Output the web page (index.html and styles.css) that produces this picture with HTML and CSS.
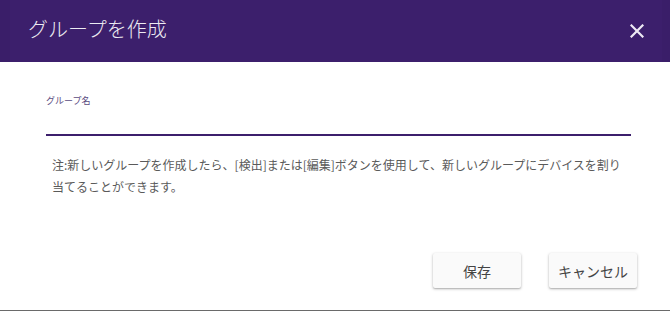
FILE: index.html
```html
<!DOCTYPE html>
<html lang="ja">
<head>
<meta charset="utf-8">
<link rel="stylesheet" href="styles.css">
</head>
<body>
<div class="dialog">
  <header class="header">
    <h1 class="title">グループを作成</h1>
    <button class="close" aria-label="閉じる">
      <svg width="14" height="14" viewBox="0 0 14 14"><path d="M1.5 1.5 L12.5 12.5 M12.5 1.5 L1.5 12.5" stroke="#eeeaf4" stroke-width="2.2" stroke-linecap="square"/></svg>
    </button>
  </header>
  <div class="content">
    <div class="field">
      <label class="label">グループ名</label>
      <div class="input"></div>
    </div>
    <p class="note">注:新しいグループを作成したら、[検出]または[編集]ボタンを使用して、新しいグループにデバイスを割り当てることができます。</p>
  </div>
  <div class="actions">
    <button class="btn">保存</button>
    <button class="btn">キャンセル</button>
  </div>
</div>
</body>
</html>
```
FILE: styles.css
```css
html, body {
  margin: 0;
  padding: 0;
  background: #fff;
}
body {
  font-family: "Noto Sans CJK JP", "Noto Sans", sans-serif;
  width: 670px;
  height: 311px;
  overflow: hidden;
}
.dialog {
  height: 310px;
  border-bottom: 1px solid #6a6a6a;
  display: flex;
  flex-direction: column;
}
.header {
  height: 62px;
  background: #3c1f6c;
  box-shadow: inset 10px 0 0 #3a1e69, inset -8px 0 0 #3a1e69;
  display: flex;
  align-items: center;
  justify-content: space-between;
  padding: 0 26px 0 28px;
  box-sizing: border-box;
}
.title {
  margin: 0;
  font-size: 20px;
  font-weight: 300;
  color: #ecebf2;
  line-height: 1;
  position: relative;
  top: -2px;
}
.close {
  background: none;
  border: 0;
  padding: 0;
  width: 14px;
  height: 14px;
  display: block;
  cursor: pointer;
}
.close svg { display: block; }
.content {
  padding: 33px 39px 0 46px;
}
.field {
  display: flex;
  flex-direction: column;
}
.label {
  font-size: 9px;
  color: #5b4c82;
  line-height: 12px;
}
.input {
  height: 27px;
  border-bottom: 2px solid #3c1f6c;
}
.note {
  margin: 18px 0 0 6px;
  font-size: 12px;
  line-height: 22px;
  color: #5a5a5a;
  padding-right: 8px;
}
.actions {
  margin-top: auto;
  display: flex;
  justify-content: flex-end;
  gap: 28px;
  padding: 0 33px 22px 0;
}
.btn {
  width: 88px;
  height: 35px;
  border: 0;
  border-radius: 2px;
  background: #fafafa;
  box-shadow: 0 1px 3px rgba(0,0,0,0.28), 0 1px 1px rgba(0,0,0,0.1);
  font-family: "Noto Sans CJK JP", "Noto Sans", sans-serif;
  font-size: 14px;
  font-weight: 400;
  color: #444;
  padding: 0;
}
```
